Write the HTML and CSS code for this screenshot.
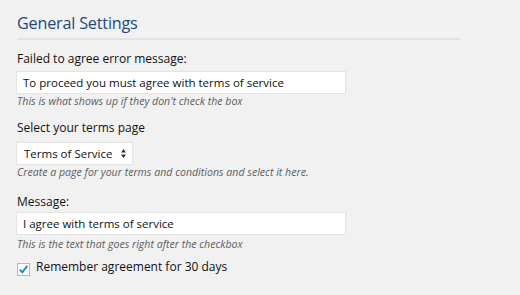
FILE: index.html
```html
<!DOCTYPE html>
<html>
<head>
<meta charset="utf-8">
<link rel="stylesheet" href="styles.css">
</head>
<body>
<div class="page">
  <h3 class="title">General Settings</h3>
  <div class="field f1">
    <label class="label">Failed to agree error message:</label>
    <div class="input wide">To proceed you must agree with terms of service</div>
    <p class="desc">This is what shows up if they don't check the box</p>
  </div>
  <div class="field f2">
    <label class="label">Select your terms page</label>
    <div class="select"><span>Terms of Service</span>
      <svg class="arrows" width="5" height="9" viewBox="0 0 5 9"><path d="M2.5 0 L5 3.6 H0 Z M2.5 9 L5 5.4 H0 Z" fill="#333"/></svg>
    </div>
    <p class="desc">Create a page for your terms and conditions and select it here.</p>
  </div>
  <div class="field f3">
    <label class="label">Message:</label>
    <div class="input wide">I agree with terms of service</div>
    <p class="desc">This is the text that goes right after the checkbox</p>
  </div>
  <div class="check-row">
    <span class="checkbox">
      <svg width="11" height="11" viewBox="0 0 11 11"><path d="M1.8 5.6 L4.3 8.3 L9.3 1.8" fill="none" stroke="#1e8cbe" stroke-width="2"/></svg>
    </span>
    <span class="check-label">Remember agreement for 30 days</span>
  </div>
</div>
</body>
</html>
```
FILE: styles.css
```css
html, body {
  margin: 0;
  padding: 0;
  background: #f1f1f1;
}
body {
  font-family: "Open Sans", "Liberation Sans", sans-serif;
  color: #222;
}
.page {
  padding: 12px 0 0 17px;
  width: 443px;
}
.title {
  margin: 0;
  font-size: 16.2px;
  font-weight: 500;
  letter-spacing: -0.2px;
  color: #23487a;
  line-height: 23px;
  padding-bottom: 3px;
  border-bottom: 2px solid #e2e2e2;
}
.field {
  display: flex;
  flex-direction: column;
  align-items: flex-start;
}
.label {
  font-size: 12px;
  font-weight: 500;
  line-height: 16px;
  color: #111;
}
.f1 .label { margin-top: 11px; }
.f2 .label { margin-top: 12px; }
.f3 .label { margin-top: 15px; }
.input {
  background: #fff;
  box-shadow: 0 0 1px 1px #e4e4e4;
  height: 21px;
  line-height: 21px;
  font-size: 11.5px;
  font-weight: 500;
  padding: 0 6px;
  box-sizing: border-box;
  color: #111;
  white-space: nowrap;
}
.f1 .input { margin-top: 5px; }
.f3 .input { margin-top: 3px; }
.wide { width: 328px; }
.select {
  margin-top: 7px;
  background: #fff;
  box-shadow: 0 0 1px 1px #e4e4e4;
  height: 21px;
  font-size: 11.5px;
  font-weight: 500;
  padding: 0 6px 0 7px;
  display: flex;
  align-items: center;
  justify-content: space-between;
  width: 115px;
  box-sizing: border-box;
  white-space: nowrap;
  color: #111;
}
.desc {
  font-size: 10.6px;
  font-style: italic;
  color: #5e5e5e;
  line-height: 14px;
  white-space: nowrap;
}
.f1 .desc { margin: 1px 0 0; }
.f2 .desc { margin: 1px 0 0; }
.f3 .desc { margin: 3px 0 0; }
.check-row {
  display: flex;
  align-items: flex-start;
  gap: 6px;
  margin-top: 8px;
}
.checkbox {
  margin-top: 4px;
  width: 11px;
  height: 11px;
  background: #fbfbfb;
  border: 1px solid #b4b9be;
  display: flex;
  align-items: center;
  justify-content: center;
}
.check-label {
  font-size: 12px;
  font-weight: 500;
  line-height: 16px;
  color: #111;
}
```
